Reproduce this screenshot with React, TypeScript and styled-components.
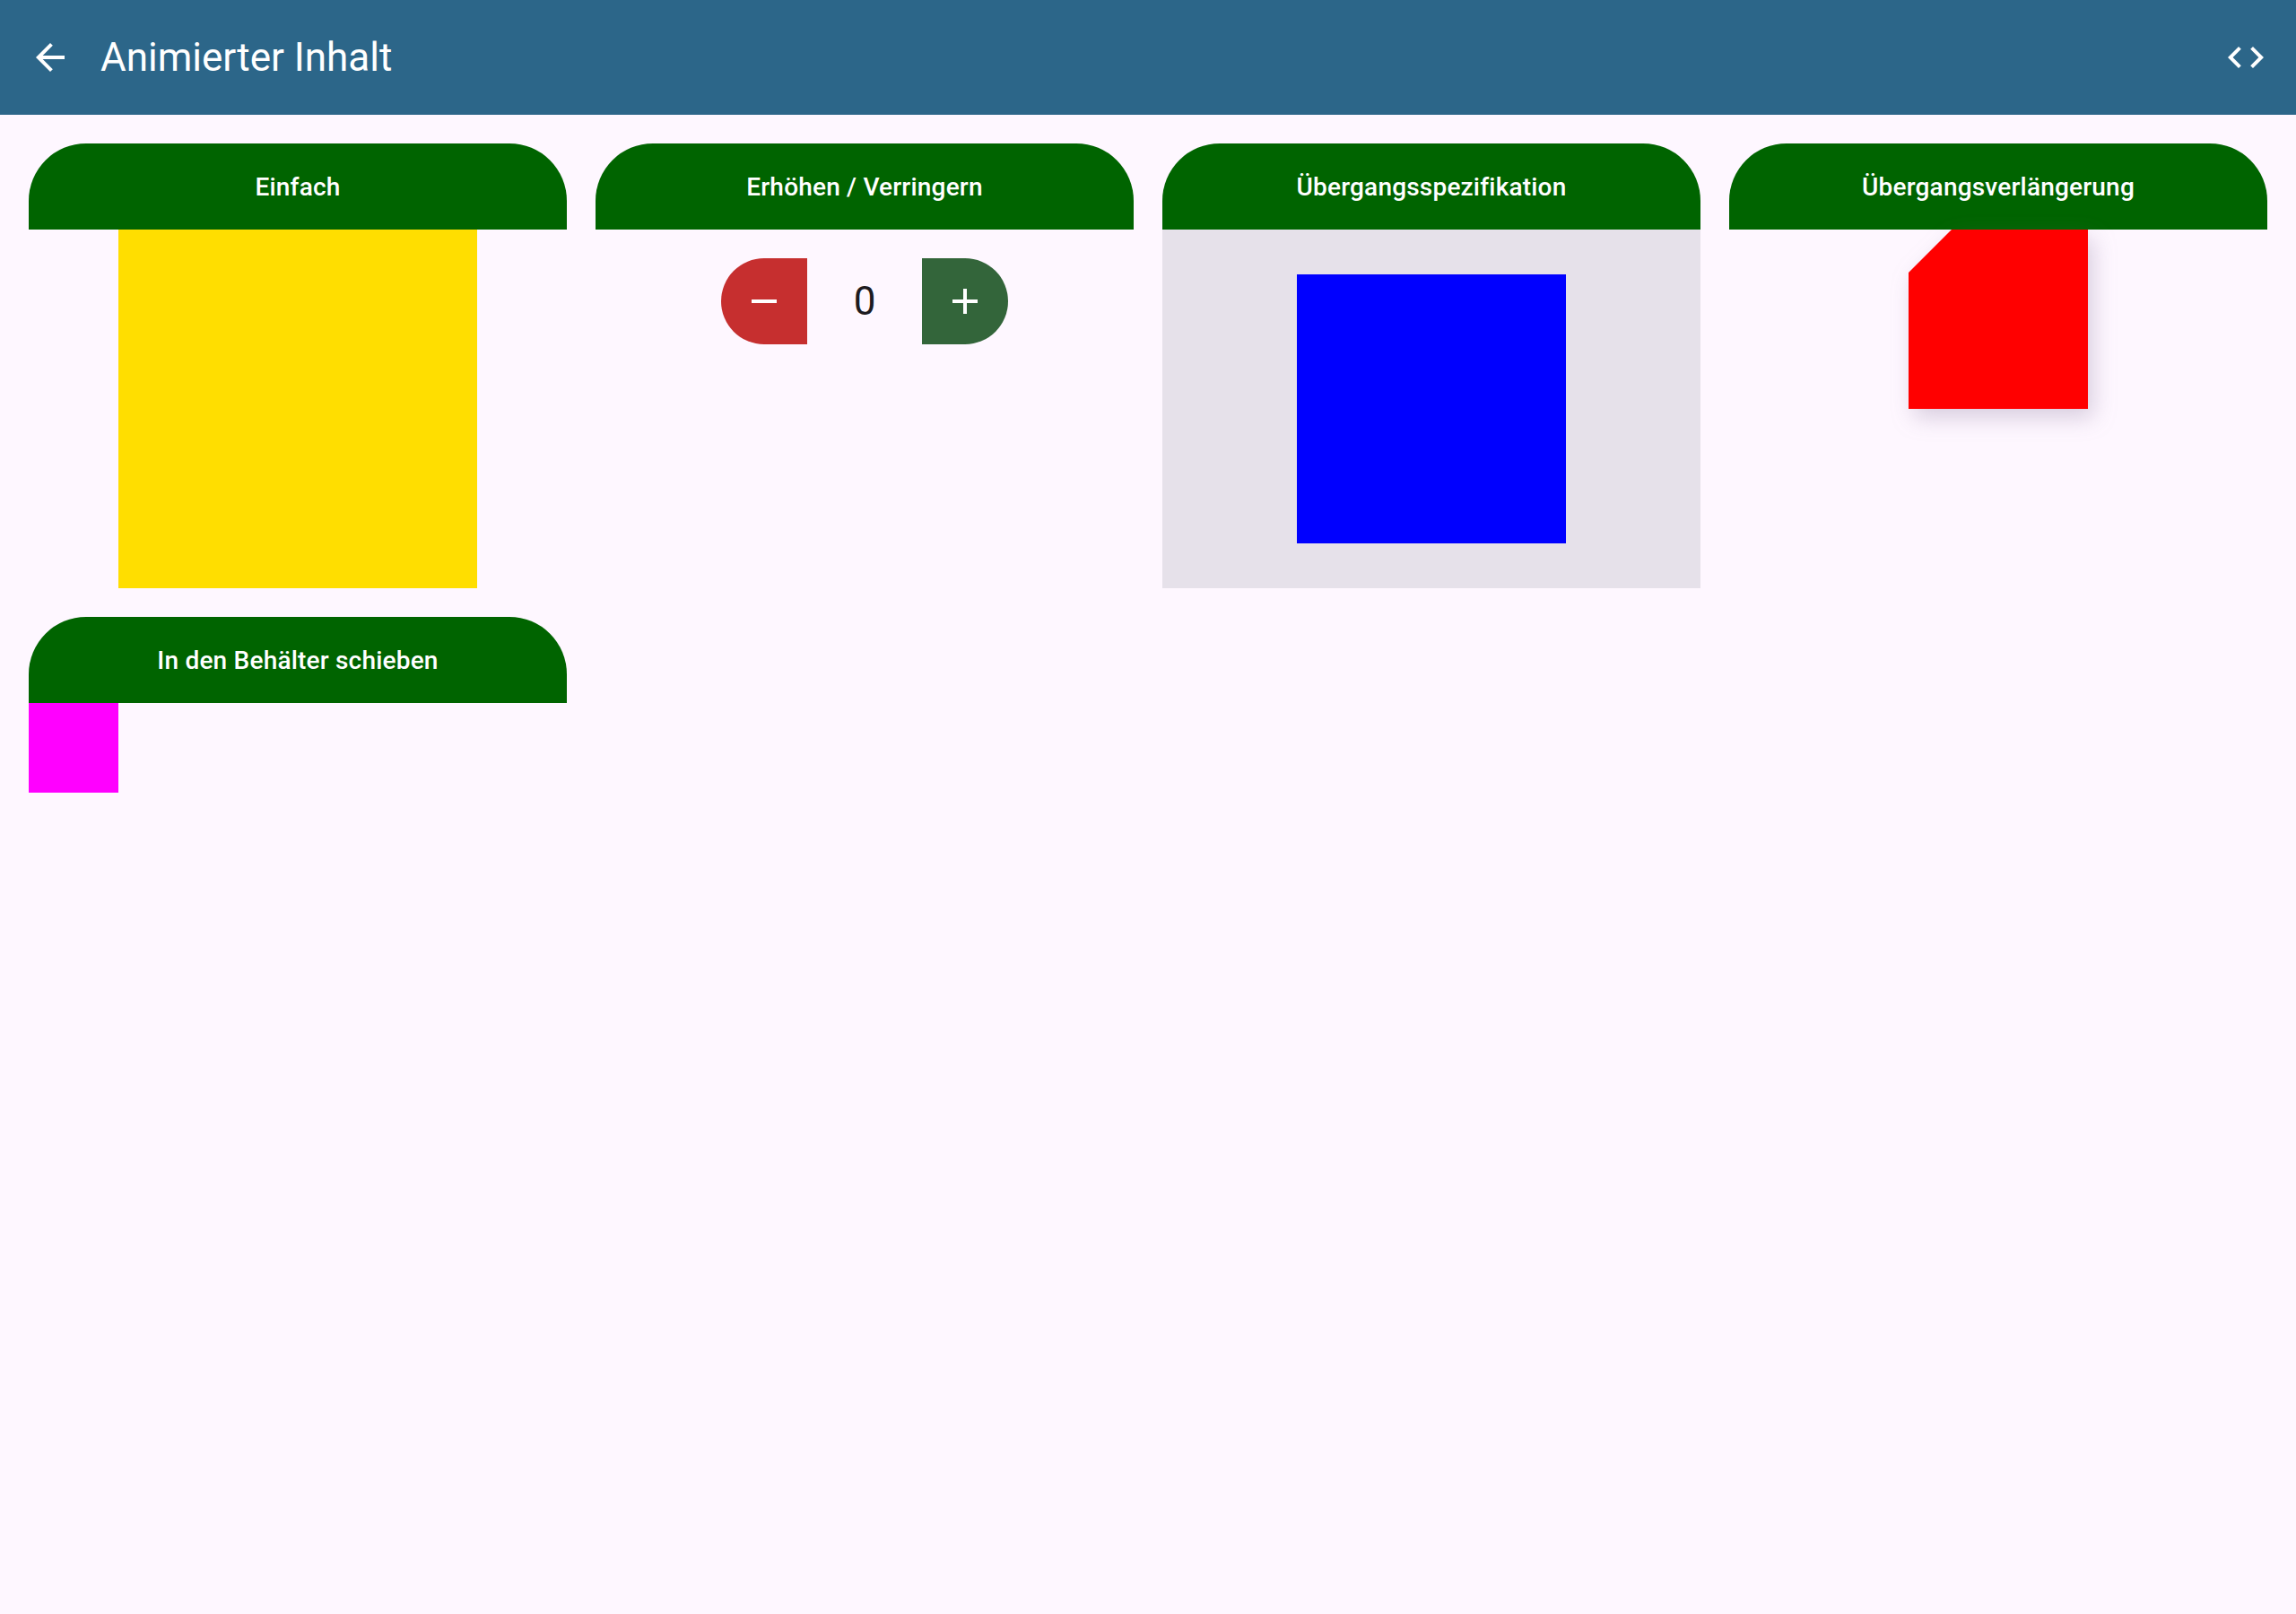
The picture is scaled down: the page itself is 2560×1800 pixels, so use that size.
import styled, { createGlobalStyle } from 'styled-components';

const GlobalStyle = createGlobalStyle`
  body {
    margin: 0;
    background: #fef7ff;
    font-family: Roboto, 'Liberation Sans', sans-serif;
  }
`;

function BackIcon() {
  return (
    <svg width="48" height="48" viewBox="0 0 24 24" fill="#ffffff">
      <path d="M20 11H7.83l5.59-5.59L12 4l-8 8 8 8 1.41-1.41L7.83 13H20v-2z" />
    </svg>
  );
}

function CodeIcon() {
  return (
    <svg width="48" height="48" viewBox="0 0 24 24" fill="#ffffff">
      <path d="M9.4 16.6L4.8 12l4.6-4.6L8 6l-6 6 6 6 1.4-1.4zm5.2 0l4.6-4.6-4.6-4.6L16 6l6 6-6 6-1.4-1.4z" />
    </svg>
  );
}

function MinusIcon() {
  return (
    <svg width="48" height="48" viewBox="0 0 24 24" fill="#ffffff">
      <path d="M19 13H5v-2h14v2z" />
    </svg>
  );
}

function PlusIcon() {
  return (
    <svg width="48" height="48" viewBox="0 0 24 24" fill="#ffffff">
      <path d="M19 13h-6v6h-2v-6H5v-2h6V5h2v6h6v2z" />
    </svg>
  );
}

export default function App() {
  return (
    <>
      <GlobalStyle />
      <AppBar>
        <BarIcon aria-label="Zurück">
          <BackIcon />
        </BarIcon>
        <BarTitle>Animierter Inhalt</BarTitle>
        <BarIcon aria-label="Quellcode">
          <CodeIcon />
        </BarIcon>
      </AppBar>
      <Grid>
        <Card>
          <CardHeader>Einfach</CardHeader>
          <CenterBody>
            <ColorBox $size={400} $color="#ffde00" />
          </CenterBody>
        </Card>

        <Card>
          <CardHeader>Erhöhen / Verringern</CardHeader>
          <CounterRow>
            <CounterButton $side="left" $color="#c62f2f" aria-label="Verringern">
              <MinusIcon />
            </CounterButton>
            <CounterValue>0</CounterValue>
            <CounterButton $side="right" $color="#33653a" aria-label="Erhöhen">
              <PlusIcon />
            </CounterButton>
          </CounterRow>
        </Card>

        <Card>
          <CardHeader>Übergangsspezifikation</CardHeader>
          <TintedBody>
            <ColorBox $size={300} $color="#0000ff" />
          </TintedBody>
        </Card>

        <Card>
          <CardHeader>Übergangsverlängerung</CardHeader>
          <CenterBody>
            <ShadowWrap>
              <CutBox />
            </ShadowWrap>
          </CenterBody>
        </Card>

        <Card>
          <CardHeader>In den Behälter schieben</CardHeader>
          <StartBody>
            <ColorBox $size={100} $color="#ff00ff" />
          </StartBody>
        </Card>
      </Grid>
    </>
  );
}

const AppBar = styled.header`
  display: flex;
  align-items: center;
  height: 128px;
  padding: 0 32px;
  background: #2c6689;
  color: #ffffff;
  box-sizing: border-box;
`;

const BarIcon = styled.div`
  display: flex;
  align-items: center;
  justify-content: center;
  width: 48px;
  height: 48px;
`;

const BarTitle = styled.h1`
  flex: 1;
  margin: 0 0 0 32px;
  font-size: 44px;
  font-weight: 400;
  line-height: 56px;
  letter-spacing: 0;
`;

const Grid = styled.main`
  display: grid;
  grid-template-columns: repeat(4, 600px);
  gap: 32px;
  align-items: start;
  padding: 32px;
`;

const Card = styled.section`
  display: flex;
  flex-direction: column;
`;

const CardHeader = styled.h2`
  display: flex;
  align-items: center;
  justify-content: center;
  height: 96px;
  margin: 0;
  border-radius: 64px 64px 0 0;
  background: #006400;
  color: #ffffff;
  font-size: 28px;
  font-weight: 500;
  letter-spacing: 0.2px;
`;

const CenterBody = styled.div`
  display: flex;
  justify-content: center;
  min-height: 400px;
`;

const StartBody = styled.div`
  display: flex;
  justify-content: flex-start;
`;

const TintedBody = styled.div`
  display: flex;
  align-items: center;
  justify-content: center;
  height: 400px;
  background: #e6e1ea;
`;

const ColorBox = styled.div<{ $size: number; $color: string }>`
  width: ${({ $size }) => $size}px;
  height: ${({ $size }) => $size}px;
  background: ${({ $color }) => $color};
`;

const ShadowWrap = styled.div`
  align-self: flex-start;
  filter: drop-shadow(6px 10px 12px rgba(120, 100, 140, 0.28));
`;

const CutBox = styled.div`
  width: 200px;
  height: 200px;
  background: #ff0000;
  clip-path: polygon(48px 0, 100% 0, 100% 100%, 0 100%, 0 48px);
`;

const CounterRow = styled.div`
  display: flex;
  align-items: center;
  justify-content: center;
  padding-top: 32px;
`;

const CounterButton = styled.button<{ $side: 'left' | 'right'; $color: string }>`
  display: flex;
  align-items: center;
  justify-content: center;
  width: 96px;
  height: 96px;
  padding: 0;
  border: none;
  background: ${({ $color }) => $color};
  border-radius: ${({ $side }) => ($side === 'left' ? '48px 0 0 48px' : '0 48px 48px 0')};
`;

const CounterValue = styled.span`
  width: 128px;
  text-align: center;
  color: #1d1b20;
  font-size: 44px;
  font-weight: 400;
`;
